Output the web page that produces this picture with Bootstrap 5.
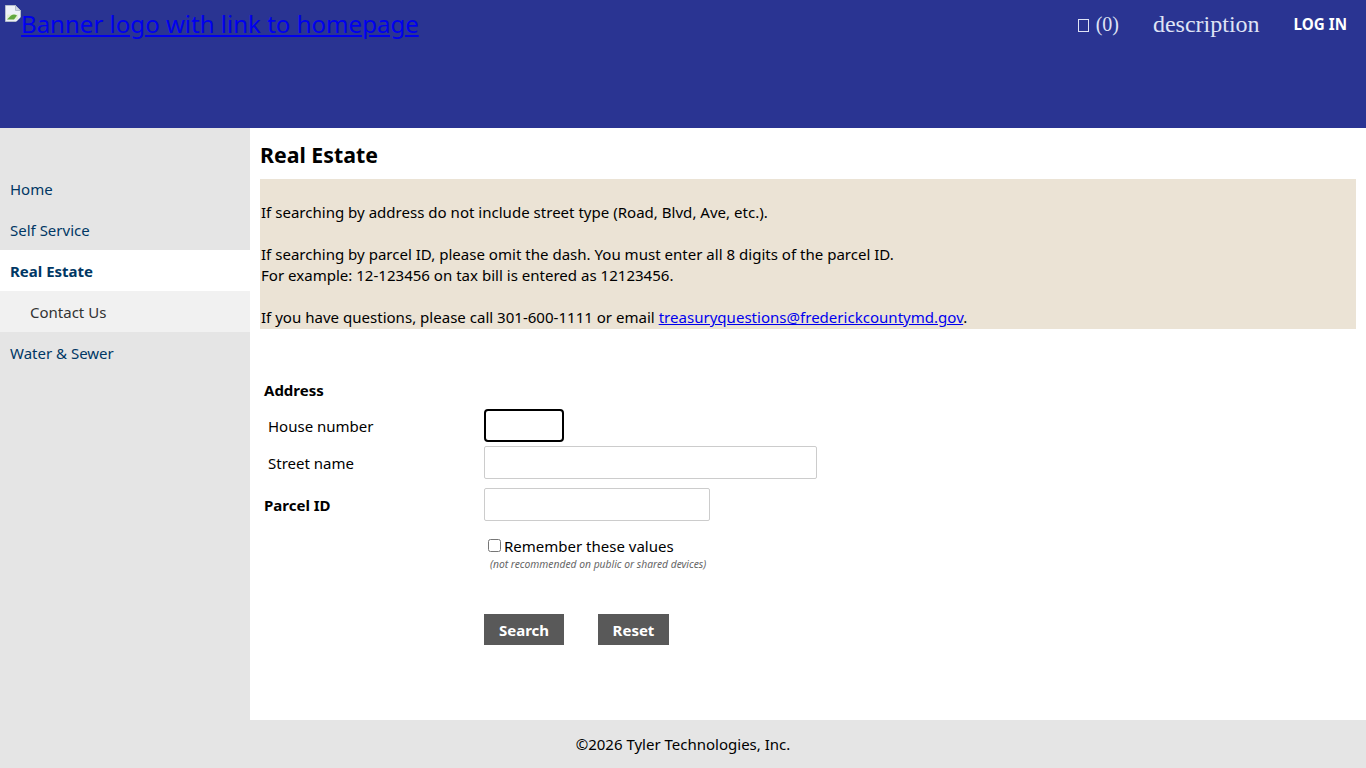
<!DOCTYPE html>
<html lang="en">
<head>
  <meta charset="UTF-8" />
  <title>Real Estate</title>
  <link href="https://cdn.jsdelivr.net/npm/bootstrap@5.3.3/dist/css/bootstrap.min.css" rel="stylesheet" />
  <style>
    html, body { height: 100%; }
    body { font-family: "Noto Sans", "Open Sans", sans-serif; font-size: 15px; color: #000; line-height: 21px; overflow: hidden; }
    .site-wrap { height: 768px; }
    .site-head { height: 128px; background: #2a3492; padding: 5px 19px 0 5px; }
    .logo-link { color: #0000ee; font-size: 24.05px; line-height: 38px; }
    .logo-link:hover { color: #0000ee; }
    .broken-img { width: 16px; height: 17px; margin-bottom: 11px; vertical-align: baseline; }
    .head-right { height: 38px; }
    .head-serif { font-family: "Liberation Serif", serif; color: #dfe3f5; }
    .cart-box { display: inline-block; width: 11px; height: 13px; border: 1px solid #dfe3f5; margin-right: 7px; vertical-align: -1px; }
    .cart-txt { font-size: 20px; margin-right: 34px; }
    .desc-txt { font-size: 24px; margin-right: 34px; }
    .login-link { color: #fff; font-weight: 700; font-size: 15.2px; text-decoration: none; }
    .side-nav { width: 250px; background: #e5e5e5; padding-top: 40px; }
    .side-nav a { display: block; height: 41px; line-height: 43px; padding-left: 10px; color: #003764; text-decoration: none; }
    .side-nav a.on { background: #fff; font-weight: 700; }
    .side-nav a.sub { background: #f1f1f1; color: #333; padding-left: 30px; }
    .main-area { padding: 10px 10px 0 10px; }
    .page-title { font-size: 21.3px; line-height: 34px; font-weight: 700; margin: 0 0 7px 0; }
    .notice-box { background: #ebe3d5; padding: 23px 1px 1px 1px; height: 150px; font-size: 15.05px; }
    .notice-box p { margin: 0 0 21px 0; }
    .notice-box p:last-child { margin: 0; }
    .mail-link { color: #0000ee; }
    .form-area { margin-top: 51px; width: 580px; }
    .form-line { display: flex; align-items: center; }
    .lbl-col { width: 224px; padding-left: 4px; flex-shrink: 0; }
    .form-line .lbl-col { padding-top: 2px; }
    .lbl-sub { padding-left: 8px; }
    .lbl-b { font-weight: 700; }
    .parcel-line { margin-top: 9px; }
    .inp { display: block; height: 33px; border: 1px solid #ccc; border-radius: 2px; padding: 0 4px; background: #fff; }
    .inp:focus { outline: none; }
    .inp-focus { width: 80px; border: 2px solid #000; border-radius: 4px; }
    .inp-street { width: 333px; }
    .inp-parcel { width: 226px; }
    .remember { padding-left: 228px; margin-top: 15px; }
    .remember input { width: 13px; height: 13px; margin: 0 3px 0 0; vertical-align: 0; }
    .hint-txt { display: block; font-size: 10.3px; font-style: italic; color: #666; line-height: 14px; margin: 0 0 0 2px; }
    .btn-row { padding-left: 224px; margin-top: 43px; gap: 34px; }
    .go-btn { background: #595959; color: #fff; border: 0; border-radius: 0; height: 31px; width: 80px; padding: 0; font-weight: 700; font-size: 15px; line-height: 33px; }
    .go-btn.rst { width: 71px; }
    .go-btn:hover { background: #595959; color: #fff; }
    .site-foot { height: 48px; background: #e5e5e5; line-height: 48px; }
  </style>
</head>
<body>
  <div class="site-wrap d-flex flex-column">
    <div class="site-head d-flex justify-content-between align-items-start">
      <a class="logo-link" href="#"><svg class="broken-img" viewBox="0 0 16 17" role="img" aria-hidden="true">
        <path d="M0.500 0.500h10l5 5v11h-15z" fill="#eef1f8" stroke="#b4bccb"/>
        <path d="M10.500 0.500v5h5z" fill="#cfd6e3" stroke="#b4bccb"/>
        <path d="M2 9.500h11v5h-11z" fill="#e4f0d6"/>
        <path d="M2 14.500l4-4c2-1.500 4-1.500 6 0l-3 4z" fill="#62a83f"/>
        <path d="M11 17l5-5v5z" fill="#2a3492"/>
      </svg>Banner logo with link to homepage</a>
      <div class="head-right d-flex align-items-center">
        <span class="head-serif cart-txt"><span class="cart-box"></span>(0)</span>
        <span class="head-serif desc-txt">description</span>
        <a class="login-link" href="#">LOG IN</a>
      </div>
    </div>
    <div class="d-flex flex-grow-1">
      <nav class="side-nav flex-shrink-0">
        <a href="#">Home</a>
        <a href="#">Self Service</a>
        <a class="on" href="#">Real Estate</a>
        <a class="sub" href="#">Contact Us</a>
        <a href="#">Water &amp; Sewer</a>
      </nav>
      <main class="main-area flex-grow-1">
        <h1 class="page-title">Real Estate</h1>
        <div class="notice-box">
          <p>If searching by address do not include street type (Road, Blvd, Ave, etc.).</p>
          <p>If searching by parcel ID, please omit the dash. You must enter all 8 digits of the parcel ID.<br>For example: 12-123456 on tax bill is entered as 12123456.</p>
          <p>If you have questions, please call 301-600-1111 or email <a class="mail-link" href="#">treasuryquestions@frederickcountymd.gov</a>.</p>
        </div>
        <form class="form-area" onsubmit="return false">
          <div class="lbl-col lbl-b">Address</div>
          <div class="form-line mt-2">
            <label class="lbl-col lbl-sub" for="hn">House number</label>
            <input id="hn" class="inp inp-focus" type="text">
          </div>
          <div class="form-line mt-1">
            <label class="lbl-col lbl-sub" for="sn">Street name</label>
            <input id="sn" class="inp inp-street" type="text">
          </div>
          <div class="form-line parcel-line">
            <label class="lbl-col lbl-b" for="pid">Parcel ID</label>
            <input id="pid" class="inp inp-parcel" type="text">
          </div>
          <div class="remember">
            <label><input type="checkbox">Remember these values</label>
            <span class="hint-txt">(not recommended on public or shared devices)</span>
          </div>
          <div class="btn-row d-flex">
            <button class="btn go-btn">Search</button>
            <button class="btn go-btn rst">Reset</button>
          </div>
        </form>
      </main>
    </div>
    <div class="site-foot text-center">©2026 Tyler Technologies, Inc.</div>
  </div>
  <script src="https://cdn.jsdelivr.net/npm/bootstrap@5.3.3/dist/js/bootstrap.bundle.min.js"></script>
</body>
</html>
